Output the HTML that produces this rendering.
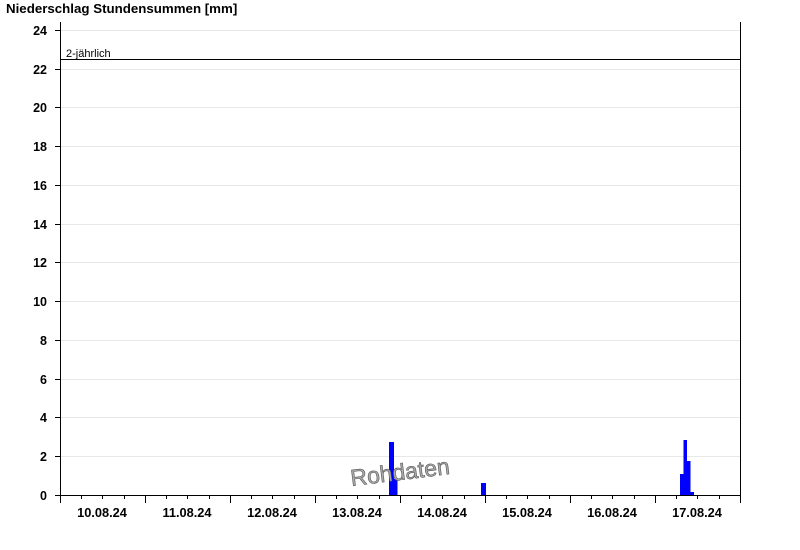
<!DOCTYPE html>
<html><head><meta charset="utf-8"><style>
html,body{margin:0;padding:0;background:#fff;}
svg{display:block;font-family:"Liberation Sans",Arial,sans-serif;}
</style></head><body>
<svg width="800" height="550" viewBox="0 0 800 550" xmlns="http://www.w3.org/2000/svg">
<text x="6" y="13" font-size="13.3" font-weight="bold" fill="#000">Niederschlag Stundensummen [mm]</text>
<g stroke="#e8e8e8" stroke-width="1">
<path d="M61 30.5H740M61 69.5H740M61 107.5H740M61 146.5H740M61 185.5H740M61 224.5H740M61 262.5H740M61 301.5H740M61 340.5H740M61 379.5H740M61 417.5H740M61 456.5H740"/>
</g>
<g fill="#0000ff">
<rect x="389" y="442" width="5" height="53"/>
<rect x="394" y="479" width="3.5" height="16"/>
<rect x="481" y="483" width="5" height="12"/>
<rect x="680" y="474" width="3.5" height="21"/>
<rect x="683.5" y="440" width="3.5" height="55"/>
<rect x="687" y="461" width="3.5" height="34"/>
<rect x="690.5" y="492" width="3.5" height="3"/>
</g>
<path d="M61 59.5H740" stroke="#000" stroke-width="1"/>
<text x="66" y="57" font-size="11" fill="#000">2-jährlich</text>
<g stroke="#000" stroke-width="1" fill="none">
<path d="M60.5 22V495.5H740.5V22"/>
<path d="M55 30.5H60M55 69.5H60M55 107.5H60M55 146.5H60M55 185.5H60M55 224.5H60M55 262.5H60M55 301.5H60M55 340.5H60M55 379.5H60M55 417.5H60M55 456.5H60M55 495.5H60"/>
<path d="M60.5 495V503M81.5 495V499M102.5 495V499M124.5 495V499M145.5 495V503M166.5 495V499M187.5 495V499M209.5 495V499M230.5 495V503M251.5 495V499M272.5 495V499M294.5 495V499M315.5 495V503M336.5 495V499M357.5 495V499M379.5 495V499M400.5 495V503M421.5 495V499M442.5 495V499M464.5 495V499M485.5 495V503M506.5 495V499M527.5 495V499M549.5 495V499M570.5 495V503M591.5 495V499M612.5 495V499M634.5 495V499M655.5 495V503M676.5 495V499M697.5 495V499M719.5 495V499M740.5 495V503"/>
</g>
<g font-size="12.5" font-weight="bold" fill="#000" text-anchor="end">
<text x="47" y="35">24</text><text x="47" y="74">22</text><text x="47" y="112">20</text>
<text x="47" y="151">18</text><text x="47" y="190">16</text><text x="47" y="229">14</text>
<text x="47" y="267">12</text><text x="47" y="306">10</text><text x="47" y="345">8</text>
<text x="47" y="384">6</text><text x="47" y="422">4</text><text x="47" y="461">2</text>
<text x="47" y="500">0</text>
</g>
<g font-size="12.8" font-weight="bold" fill="#000" text-anchor="middle">
<text x="102" y="517">10.08.24</text><text x="187" y="517">11.08.24</text>
<text x="272" y="517">12.08.24</text><text x="357" y="517">13.08.24</text>
<text x="442" y="517">14.08.24</text><text x="527" y="517">15.08.24</text>
<text x="612" y="517">16.08.24</text><text x="697" y="517">17.08.24</text>
</g>
<text x="400" y="480" font-size="23" fill="#aaa" stroke="#555" stroke-width="0.6" text-anchor="middle" transform="rotate(-7 400 472)">Rohdaten</text>
</svg>
</body></html>
